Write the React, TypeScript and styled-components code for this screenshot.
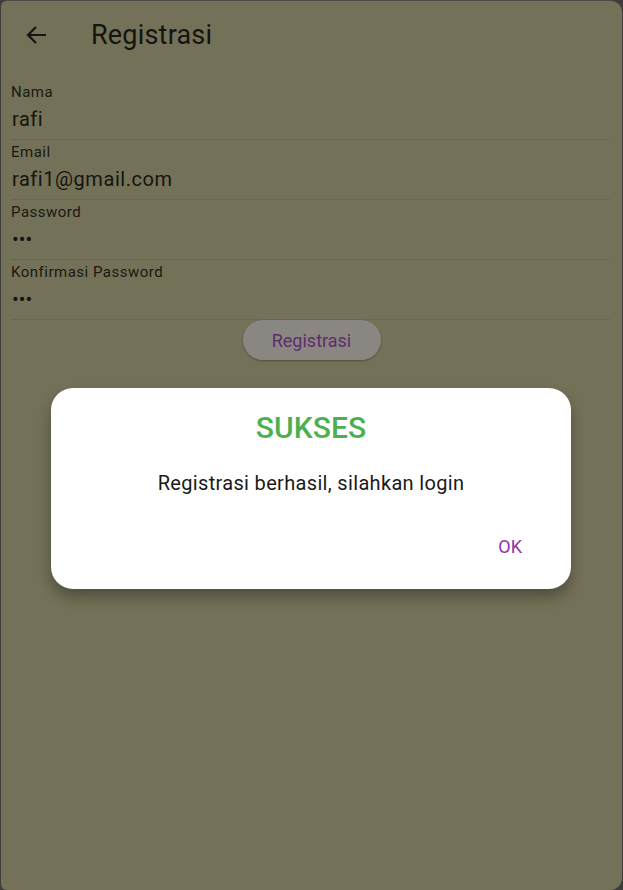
import React from "react";
import styled, { createGlobalStyle } from "styled-components";

const Global = createGlobalStyle`
  html, body { margin: 0; padding: 0; background: #3d3d3b; }
  body { font-family: Roboto, "Noto Sans", sans-serif; }
  * { box-sizing: border-box; }
`;

const Screen = styled.div`
  position: relative;
  width: 621px;
  height: 890px;
  margin-left: 1px;
  background: #737157;
  border-radius: 6px 12px 12px 6px;
  overflow: hidden;
  border-top: 1px solid #4a4a47;
`;

const AppBar = styled.header`
  display: flex;
  align-items: center;
  height: 67px;
  padding-left: 23px;
  gap: 41px;
`;

const BackButton = styled.div`
  width: 26px;
  height: 26px;
  display: flex;
  align-items: center;
  justify-content: center;
`;

const Title = styled.h1`
  margin: 0;
  font-size: 27px;
  font-weight: 400;
  color: #141410;
  letter-spacing: 0.2px;
`;

const Form = styled.div`
  display: flex;
  flex-direction: column;
  padding: 12px 12px 0 10px;
`;

const Field = styled.div`
  display: flex;
  flex-direction: column;
  height: 60px;
  border-bottom: 1px solid #66665c;
  padding-top: 3px;
`;

const Label = styled.div`
  font-size: 15px;
  line-height: 18px;
  color: #1a1912;
  letter-spacing: 0.5px;
`;

const Value = styled.div<{ $dots?: boolean }>`
  margin-top: 6px;
  font-size: 20px;
  line-height: 24px;
  color: #15140f;
  letter-spacing: ${(p) => (p.$dots ? "0px" : "0.55px")};
  padding-left: 1px;
`;

const ButtonRow = styled.div`
  display: flex;
  justify-content: center;
  padding-left: 2px;
`;

const PillButton = styled.div`
  width: 138px;
  height: 40px;
  border-radius: 20px;
  background: #8a8682;
  color: #5f2d6c;
  font-size: 18px;
  display: flex;
  align-items: center;
  justify-content: center;
  box-shadow: 0 1px 2px rgba(0, 0, 0, 0.3);
`;

const Dialog = styled.div`
  position: absolute;
  left: 50px;
  top: 387px;
  width: 520px;
  height: 201px;
  background: #ffffff;
  border-radius: 22px;
  box-shadow: 0 8px 14px rgba(0, 0, 0, 0.3);
  display: flex;
  flex-direction: column;
  align-items: center;
  padding-top: 22px;
`;

const DialogTitle = styled.div`
  font-size: 30px;
  font-weight: 500;
  color: #4caf50;
  line-height: 36px;
  letter-spacing: 0.1px;
`;

const DialogBody = styled.div`
  margin-top: 24px;
  font-size: 20px;
  line-height: 26px;
  color: #1a1a1a;
  letter-spacing: 0.33px;
`;

const Actions = styled.div`
  align-self: stretch;
  display: flex;
  justify-content: flex-end;
  padding-right: 49px;
  margin-top: 39px;
`;

const TextButton = styled.div`
  font-size: 18px;
  color: #8e33a8;
  line-height: 24px;
`;

export default function App() {
  return (
    <>
      <Global />
      <Screen>
        <AppBar>
          <BackButton>
            <svg width="24" height="24" viewBox="0 0 24 24" fill="none">
              <path
                d="M21 12H3.5M11 4L3 12l8 8"
                stroke="#141410"
                strokeWidth="2.2"
              />
            </svg>
          </BackButton>
          <Title>Registrasi</Title>
        </AppBar>
        <Form>
          <Field>
            <Label>Nama</Label>
            <Value>rafi</Value>
          </Field>
          <Field>
            <Label>Email</Label>
            <Value>rafi1@gmail.com</Value>
          </Field>
          <Field>
            <Label>Password</Label>
            <Value $dots>•••</Value>
          </Field>
          <Field>
            <Label>Konfirmasi Password</Label>
            <Value $dots>•••</Value>
          </Field>
          <ButtonRow>
            <PillButton>Registrasi</PillButton>
          </ButtonRow>
        </Form>
        <Dialog>
          <DialogTitle>SUKSES</DialogTitle>
          <DialogBody>Registrasi berhasil, silahkan login</DialogBody>
          <Actions>
            <TextButton>OK</TextButton>
          </Actions>
        </Dialog>
      </Screen>
    </>
  );
}
